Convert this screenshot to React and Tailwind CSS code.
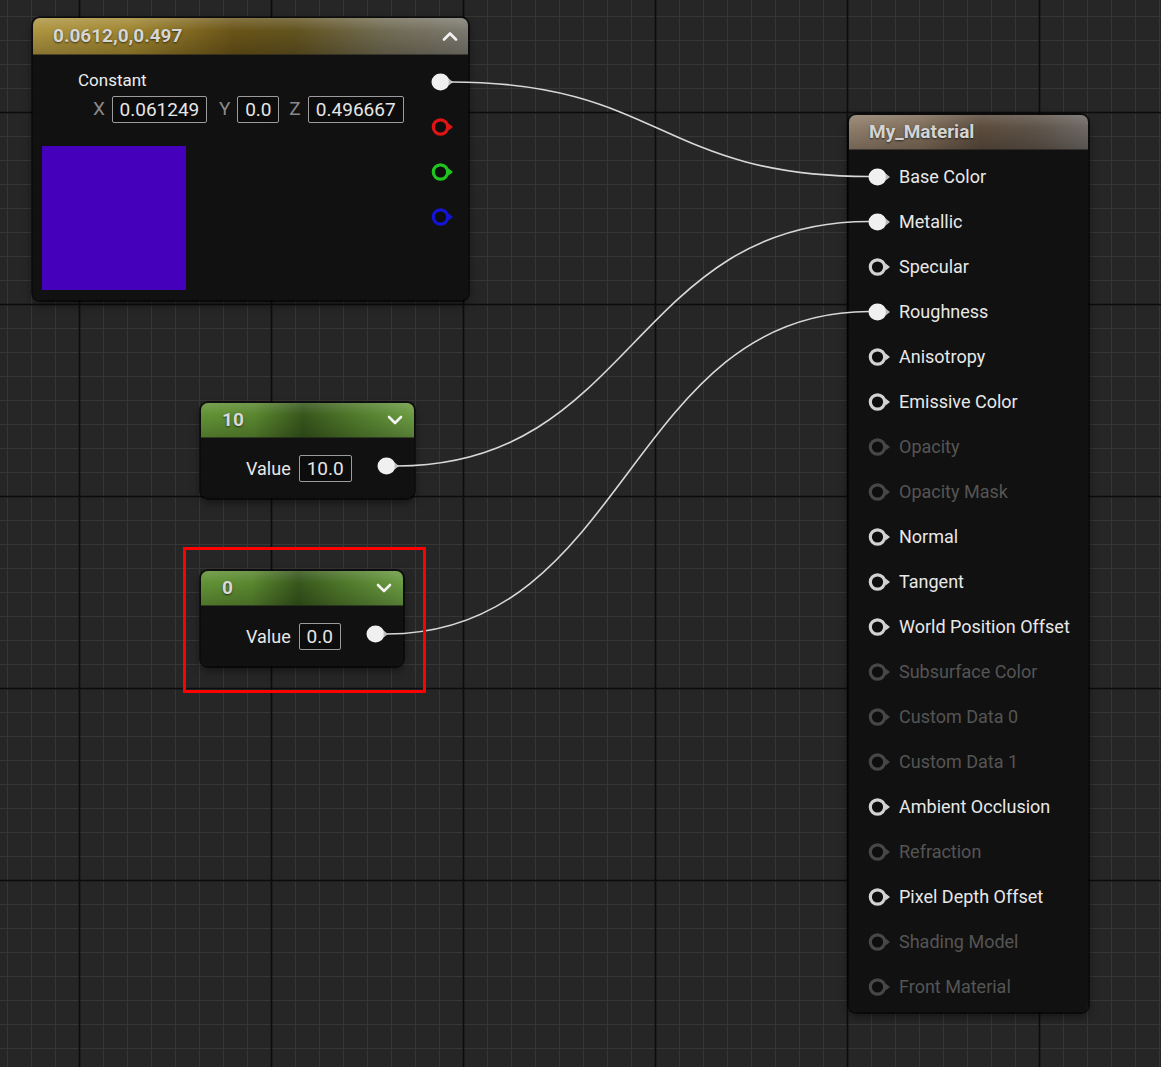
import React from 'react';

const W = 1161;
const H = 1067;

// grid lines of the graph canvas
const minorX = [];
for (let x = 7; x < W; x += 24) minorX.push(x);
const minorY = [];
for (let y = 16; y < H; y += 24) minorY.push(y);
const majorX = [79, 271, 463, 655, 847, 1039];
const majorY = [112, 304, 496, 688, 880];

const wires = [
  { from: [451, 82], to: [869, 176.5] },
  { from: [397, 466], to: [869, 221.5] },
  { from: [387, 634], to: [869, 311.5] },
];

const inputs = [
  { label: 'Base Color', pin: 'filled' },
  { label: 'Metallic', pin: 'filled' },
  { label: 'Specular', pin: 'ring' },
  { label: 'Roughness', pin: 'filled' },
  { label: 'Anisotropy', pin: 'ring' },
  { label: 'Emissive Color', pin: 'ring' },
  { label: 'Opacity', pin: 'ring', dim: true },
  { label: 'Opacity Mask', pin: 'ring', dim: true },
  { label: 'Normal', pin: 'ring' },
  { label: 'Tangent', pin: 'ring' },
  { label: 'World Position Offset', pin: 'ring' },
  { label: 'Subsurface Color', pin: 'ring', dim: true },
  { label: 'Custom Data 0', pin: 'ring', dim: true },
  { label: 'Custom Data 1', pin: 'ring', dim: true },
  { label: 'Ambient Occlusion', pin: 'ring' },
  { label: 'Refraction', pin: 'ring', dim: true },
  { label: 'Pixel Depth Offset', pin: 'ring' },
  { label: 'Shading Model', pin: 'ring', dim: true },
  { label: 'Front Material', pin: 'ring', dim: true },
];

function Pin({ kind = 'ring', color = '#d4d4d4' }) {
  return (
    <svg width="24" height="20" viewBox="0 0 24 20" className="shrink-0">
      {kind === 'filled' ? (
        <ellipse cx="9.5" cy="10" rx="9" ry="8.5" fill={color} />
      ) : (
        <circle cx="9.5" cy="10" r="7.2" fill="#0e0e0e" stroke={color} strokeWidth="3.2" />
      )}
      <polygon points="17.6,6.4 22,10 17.6,13.6" fill={kind === 'filled' ? '#bdbdbd' : color} />
    </svg>
  );
}

function Chevron({ up }) {
  return (
    <svg width="16" height="10" viewBox="0 0 16 10" className="shrink-0">
      <path
        d={up ? 'M2 8.5 L8 2.5 L14 8.5' : 'M2 2 L8 8 L14 2'}
        fill="none"
        stroke="#f2f2f2"
        strokeWidth="2.6"
        strokeLinecap="round"
        strokeLinejoin="round"
      />
    </svg>
  );
}

function Box({ children, w }) {
  return (
    <div
      className={`${w} h-[27px] flex items-center justify-center rounded-[2px] border-[1.5px] border-[#9c9c9c] bg-[#0c0c0c] text-[19px] text-[#e6e6e6] leading-none`}
    >
      {children}
    </div>
  );
}

function ValueNode({ title, value, width, boxW, top }) {
  return (
    <div
      className={`absolute left-[201px] ${top} ${width} rounded-[7px] overflow-hidden bg-[rgba(17,17,17,0.96)] shadow-[0_0_0_2px_rgba(0,0,0,0.6),0_4px_10px_rgba(0,0,0,0.5)]`}
    >
      <div className="h-[35px] flex items-center justify-between pl-[21px] pr-[11px] bg-[linear-gradient(180deg,rgba(255,255,255,0.14),rgba(255,255,255,0)_35%,rgba(0,0,0,0.2)),linear-gradient(90deg,#629235_0%,#5a872f_25%,#36561c_48%,#4e772a_70%,#6b9c42_100%)] border-b border-black/60">
        <span className="text-[19px] font-bold text-[#d8d8d8] [text-shadow:0_1px_2px_rgba(0,0,0,0.6)]">{title}</span>
        <Chevron />
      </div>
      <div className="h-[60px] flex items-center pl-[45px] pr-[13px]">
        <span className="text-[18px] text-[#e8e8e8] mr-[8px]">Value</span>
        <Box w={boxW}>{value}</Box>
        <div className="ml-auto -mt-[4px]">
          <Pin kind="filled" color="#f0f0f0" />
        </div>
      </div>
    </div>
  );
}

export default function App() {
  return (
    <div className="relative w-[1161px] h-[1067px] overflow-hidden bg-[#262626] font-['Roboto','Liberation_Sans',sans-serif]">
      <svg className="absolute inset-0" width={W} height={H}>
        {minorX.map((x) => (
          <line key={'mx' + x} x1={x + 0.5} y1="0" x2={x + 0.5} y2={H} stroke="#363636" strokeWidth="1" />
        ))}
        {minorY.map((y) => (
          <line key={'my' + y} x1="0" y1={y + 0.5} x2={W} y2={y + 0.5} stroke="#363636" strokeWidth="1" />
        ))}
        {majorX.map((x) => (
          <line key={'Mx' + x} x1={x + 0.5} y1="0" x2={x + 0.5} y2={H} stroke="#0c0c0c" strokeWidth="1.6" />
        ))}
        {majorY.map((y) => (
          <line key={'My' + y} x1="0" y1={y + 0.5} x2={W} y2={y + 0.5} stroke="#0c0c0c" strokeWidth="1.6" />
        ))}
      </svg>

      {/* Constant3Vector node */}
      <div className="absolute left-[33px] top-[18px] w-[435px] h-[282px] rounded-[7px] overflow-hidden bg-[rgba(17,17,17,0.96)] shadow-[0_0_0_2px_rgba(0,0,0,0.6),0_4px_10px_rgba(0,0,0,0.5)]">
        <div className="h-[37px] flex items-center justify-between pl-[20px] pr-[10px] bg-[linear-gradient(180deg,rgba(255,255,255,0.18),rgba(255,255,255,0)_35%,rgba(0,0,0,0.2)),linear-gradient(90deg,#ad9440_0%,#a0862f_22%,#6a5418_46%,#62531f_60%,#716b52_80%,#7b7970_100%)] border-b border-black/60">
          <span className="text-[19px] font-bold text-[#d6d6d6] [text-shadow:0_1px_2px_rgba(0,0,0,0.6)]">0.0612,0,0.497</span>
          <Chevron up />
        </div>
        <div className="flex">
          <div className="flex flex-col">
            <div className="ml-[45px] mt-[15px] h-[22px] flex items-center text-[17px] text-[#ececec]">Constant</div>
            <div className="ml-[60px] mt-[3px] flex items-center text-[19px] text-[#8a8a8a]">
              <div className="flex items-center gap-[7px] mr-[12px]">
                <span>X</span>
                <Box w="w-[95px]">0.061249</Box>
              </div>
              <div className="flex items-center gap-[7px] mr-[10px]">
                <span>Y</span>
                <Box w="w-[42px]">0.0</Box>
              </div>
              <div className="flex items-center gap-[7px]">
                <span>Z</span>
                <Box w="w-[96px]">0.496667</Box>
              </div>
            </div>
            <div className="ml-[9px] mt-[22px] w-[144px] h-[144px] bg-[#4500bb]" />
          </div>
          <div className="ml-auto pr-[13px] pt-[17px] flex flex-col gap-[25px]">
            <Pin kind="filled" color="#f0f0f0" />
            <Pin color="#e01414" />
            <Pin color="#1fc41f" />
            <Pin color="#1414d6" />
          </div>
        </div>
      </div>

      <ValueNode title="10" value="10.0" width="w-[213px]" boxW="w-[53px]" top="top-[403px]" />
      <ValueNode title="0" value="0.0" width="w-[202px]" boxW="w-[42px]" top="top-[571px]" />

      {/* Material result node */}
      <div className="absolute left-[849px] top-[115px] w-[239px] h-[897px] rounded-[7px] overflow-hidden bg-[rgba(17,17,17,0.96)] shadow-[0_0_0_2px_rgba(0,0,0,0.6),0_4px_10px_rgba(0,0,0,0.5)]">
        <div className="h-[35px] flex items-center pl-[20px] bg-[linear-gradient(180deg,rgba(255,255,255,0.14),rgba(255,255,255,0)_35%,rgba(0,0,0,0.2)),linear-gradient(90deg,#907e6b_0%,#7f6d5a_30%,#5c4c3e_55%,#5f544a_78%,#6e6964_100%)] border-b border-black/60">
          <span className="text-[19px] font-bold text-[#d4d4d4] [text-shadow:0_1px_2px_rgba(0,0,0,0.6)]">My_Material</span>
        </div>
        <div className="pt-[4px] flex flex-col">
          {inputs.map((it) => (
            <div key={it.label} className="h-[45px] flex items-center gap-[7px] pl-[19px]">
              <Pin kind={it.pin} color={it.dim ? '#474747' : it.pin === 'filled' ? '#f0f0f0' : '#d2d2d2'} />
              <span className={`text-[18px] ${it.dim ? 'text-[#555555]' : 'text-[#e8e8e8]'}`}>{it.label}</span>
            </div>
          ))}
        </div>
      </div>

      {/* wires */}
      <svg className="absolute inset-0 pointer-events-none" width={W} height={H}>
        {wires.map((w, i) => {
          const [x1, y1] = w.from;
          const [x2, y2] = w.to;
          const d = (x2 - x1) / 2;
          return (
            <path
              key={i}
              d={`M${x1} ${y1} C${x1 + d} ${y1} ${x2 - d} ${y2} ${x2} ${y2}`}
              fill="none"
              stroke="#d8d8d8"
              strokeWidth="1.6"
            />
          );
        })}
      </svg>

      {/* highlight around the selected node */}
      <div className="absolute left-[183px] top-[547px] w-[243px] h-[146px] border-[3px] border-[#ff0000]" />
    </div>
  );
}
